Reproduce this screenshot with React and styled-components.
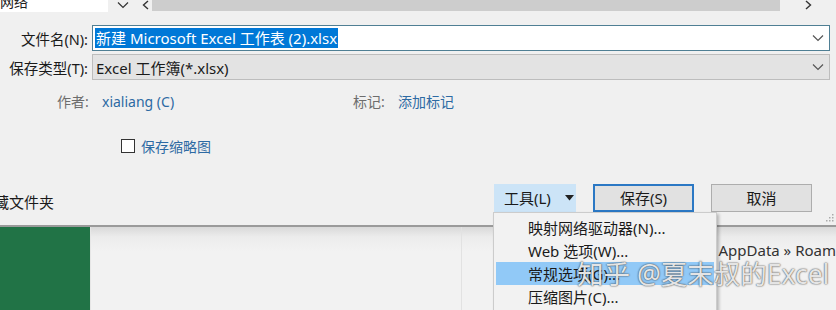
import React from "react";
import styled, { createGlobalStyle } from "styled-components";

const GlobalStyle = createGlobalStyle`
    html, body {
        margin: 0;
        padding: 0;
        background: #f0f0f0;
    }
    body {
        font-family: "Noto Sans", "Noto Sans CJK SC", sans-serif;
        font-size: 14px;
        color: #1a1a1a;
    }
`;

const Chevron = ({ color = "#555" }) => (
    <svg width="12" height="8" viewBox="0 0 12 8">
        <path d="M1 1.5 L6 6.5 L11 1.5" fill="none" stroke={color} strokeWidth="1.2" />
    </svg>
);

const App = () => (
    <Screen>
        <GlobalStyle />
        <Dialog>
            <TopStrip>
                <LocationBox>网络</LocationBox>
                <StripIcon width={30}>
                    <Chevron color="#333" />
                </StripIcon>
                <StripIcon width={14}>
                    <svg width="7" height="10" viewBox="0 0 7 10">
                        <path d="M6 1 L1.5 5 L6 9" fill="none" stroke="#333" strokeWidth="1.4" />
                    </svg>
                </StripIcon>
                <ScrollTrack />
                <StripIcon width={56}>
                    <svg width="7" height="10" viewBox="0 0 7 10">
                        <path d="M1 1 L5.5 5 L1 9" fill="none" stroke="#333" strokeWidth="1.4" />
                    </svg>
                </StripIcon>
            </TopStrip>

            <Form>
                <FieldRow>
                    <FieldLabel>文件名(N):</FieldLabel>
                    <Field kind="edit">
                        <Selected>新建 Microsoft Excel 工作表 (2).xlsx</Selected>
                        <FieldArrow>
                            <Chevron />
                        </FieldArrow>
                    </Field>
                </FieldRow>
                <FieldRow>
                    <FieldLabel>保存类型(T):</FieldLabel>
                    <Field kind="combo">
                        <FieldText>Excel 工作簿(*.xlsx)</FieldText>
                        <FieldArrow>
                            <Chevron />
                        </FieldArrow>
                    </Field>
                </FieldRow>

                <MetaRow>
                    <MetaLabel>作者:</MetaLabel>
                    <MetaValue>xialiang (C)</MetaValue>
                    <MetaLabel>标记:</MetaLabel>
                    <MetaValue>添加标记</MetaValue>
                </MetaRow>

                <CheckRow>
                    <CheckBox />
                    <MetaValue>保存缩略图</MetaValue>
                </CheckRow>
            </Form>

            <Footer>
                <HideFolders>隐藏文件夹</HideFolders>
                <Buttons>
                    <ToolsButton>
                        工具(L)
                        <svg width="9" height="6" viewBox="0 0 9 6">
                            <path d="M0 0 H9 L4.5 5.5 Z" fill="#222" />
                        </svg>
                    </ToolsButton>
                    <Button primary>保存(S)</Button>
                    <Button>取消</Button>
                </Buttons>
                <Grip>
                    <svg width="8" height="8" viewBox="0 0 8 8">
                        <rect x="6" y="0" width="1.5" height="1.5" fill="#aaa" />
                        <rect x="3" y="3" width="1.5" height="1.5" fill="#aaa" />
                        <rect x="6" y="3" width="1.5" height="1.5" fill="#aaa" />
                        <rect x="0" y="6" width="1.5" height="1.5" fill="#aaa" />
                        <rect x="3" y="6" width="1.5" height="1.5" fill="#aaa" />
                        <rect x="6" y="6" width="1.5" height="1.5" fill="#aaa" />
                    </svg>
                </Grip>
            </Footer>
        </Dialog>

        <Workspace>
            <Sidebar />
            <Backstage>
                <Divider />
                <PathText>» AppData » Roam</PathText>
            </Backstage>
        </Workspace>

        <Menu>
            <MenuItem>映射网络驱动器(N)...</MenuItem>
            <MenuItem>Web 选项(W)...</MenuItem>
            <MenuItem active>常规选项(G)...</MenuItem>
            <MenuItem>压缩图片(C)...</MenuItem>
        </Menu>

        <Watermark>知乎 @夏末叔的Excel</Watermark>
    </Screen>
);

const Screen = styled.div`
    position: relative;
    width: 836px;
    height: 310px;
    overflow: hidden;
`;

const Dialog = styled.div`
    position: relative;
    display: flex;
    flex-direction: column;
    height: 227px;
    background: #f0f0f0;
    border-bottom: 2px solid #9a9a9a;
    box-sizing: border-box;
`;

const TopStrip = styled.div`
    display: flex;
    align-items: stretch;
    height: 12px;
    overflow: hidden;
`;

const LocationBox = styled.div`
    width: 108px;
    background: #fff;
    font-size: 14px;
    line-height: 14px;
    margin-top: -5px;
    overflow: hidden;
    color: #222;
`;

const StripIcon = styled.div`
    width: ${p => p.width}px;
    display: flex;
    align-items: center;
    justify-content: center;
    margin-top: -2px;
`;

const ScrollTrack = styled.div`
    flex: 1;
    background: #cdcdcd;
    height: 11px;
`;

const Form = styled.div`
    display: flex;
    flex-direction: column;
    padding-top: 13px;
`;

const FieldRow = styled.div`
    display: grid;
    grid-template-columns: 92px 738px;
    align-items: center;
    margin-bottom: 3px;
`;

const FieldLabel = styled.div`
    text-align: right;
    padding-right: 4px;
    font-size: 14.5px;
    color: #1a1a1a;
`;

const Field = styled.div`
    display: flex;
    align-items: center;
    height: 26px;
    box-sizing: border-box;
    padding-left: 2px;
    background: ${p => (p.kind === "edit" ? "#fff" : "#e3e3e3")};
    border: 1px solid ${p => (p.kind === "edit" ? "#4f7f94" : "#bdbdbd")};
`;

const Selected = styled.span`
    background: #0078d7;
    color: #fff;
    font-size: 15px;
    line-height: 20px;
    padding: 0 1px;
`;

const FieldText = styled.span`
    font-size: 15px;
    padding-left: 1px;
    color: #1a1a1a;
`;

const FieldArrow = styled.div`
    margin-left: auto;
    width: 22px;
    display: flex;
    justify-content: center;
`;

const MetaRow = styled.div`
    display: grid;
    grid-template-columns: 45px 251px 45px auto;
    padding-left: 57px;
    margin-top: 9px;
    font-size: 14px;
    line-height: 20px;
`;

const MetaLabel = styled.span`
    color: #6d6d6d;
`;

const MetaValue = styled.span`
    color: #2d6aa3;
    font-size: 14px;
`;

const CheckRow = styled.div`
    display: flex;
    align-items: center;
    gap: 6px;
    padding-left: 121px;
    margin-top: 24px;
`;

const CheckBox = styled.span`
    width: 14px;
    height: 14px;
    box-sizing: border-box;
    border: 1px solid #333;
    background: #fff;
`;

const Footer = styled.div`
    position: relative;
    display: flex;
    align-items: center;
    margin-top: auto;
    padding: 0 24px 13px 0;
`;

const HideFolders = styled.span`
    margin-left: -21px;
    margin-top: 8px;
    font-size: 15px;
    color: #1a1a1a;
`;

const Buttons = styled.div`
    margin-left: auto;
    display: flex;
    gap: 17px;
`;

const ToolsButton = styled.div`
    width: 82px;
    height: 28px;
    box-sizing: border-box;
    display: flex;
    align-items: center;
    gap: 14px;
    padding-left: 10px;
    background: #cce4f7;
    font-size: 15px;
`;

const Button = styled.div`
    width: 101px;
    height: 28px;
    box-sizing: border-box;
    display: flex;
    align-items: center;
    justify-content: center;
    background: #e1e1e1;
    border: ${p => (p.primary ? "2px solid #2b78c4" : "1px solid #adadad")};
    font-size: 15px;
`;

const Grip = styled.div`
    position: absolute;
    right: 2px;
    bottom: 3px;
    display: flex;
`;

const Workspace = styled.div`
    display: flex;
    height: 83px;
`;

const Sidebar = styled.div`
    width: 92px;
    background: #217346;
`;

const Backstage = styled.div`
    flex: 1;
    display: flex;
    background: linear-gradient(#d9d9d9 0px, #ececec 10px, #f2f2f2 24px);
    border-left: 1px solid #e6e6e6;
`;

const Divider = styled.div`
    width: 1px;
    margin-left: 370px;
    background: #e2e2e2;
`;

const PathText = styled.div`
    margin-left: 245px;
    margin-top: 13px;
    font-size: 15px;
    color: #333;
    white-space: nowrap;
`;

const Menu = styled.div`
    position: absolute;
    left: 493px;
    top: 212px;
    width: 224px;
    padding: 3px 2px 4px;
    box-sizing: border-box;
    background: #f2f2f2;
    border: 1px solid #cccccc;
    box-shadow: 2px 2px 3px rgba(0, 0, 0, 0.25);
    display: flex;
    flex-direction: column;
`;

const MenuItem = styled.div`
    height: 23px;
    display: flex;
    align-items: center;
    padding-left: 32px;
    font-size: 15px;
    color: #1a1a1a;
    background: ${p => (p.active ? "#91c9f7" : "transparent")};
`;

const Watermark = styled.div`
    position: absolute;
    left: 577px;
    top: 253px;
    font-size: 26.5px;
    color: rgba(255, 255, 255, 0.85);
    text-shadow: 0 0 1px #555, 0 0 2px rgba(0, 0, 0, 0.6);
    white-space: nowrap;
    pointer-events: none;
`;

export default App;
